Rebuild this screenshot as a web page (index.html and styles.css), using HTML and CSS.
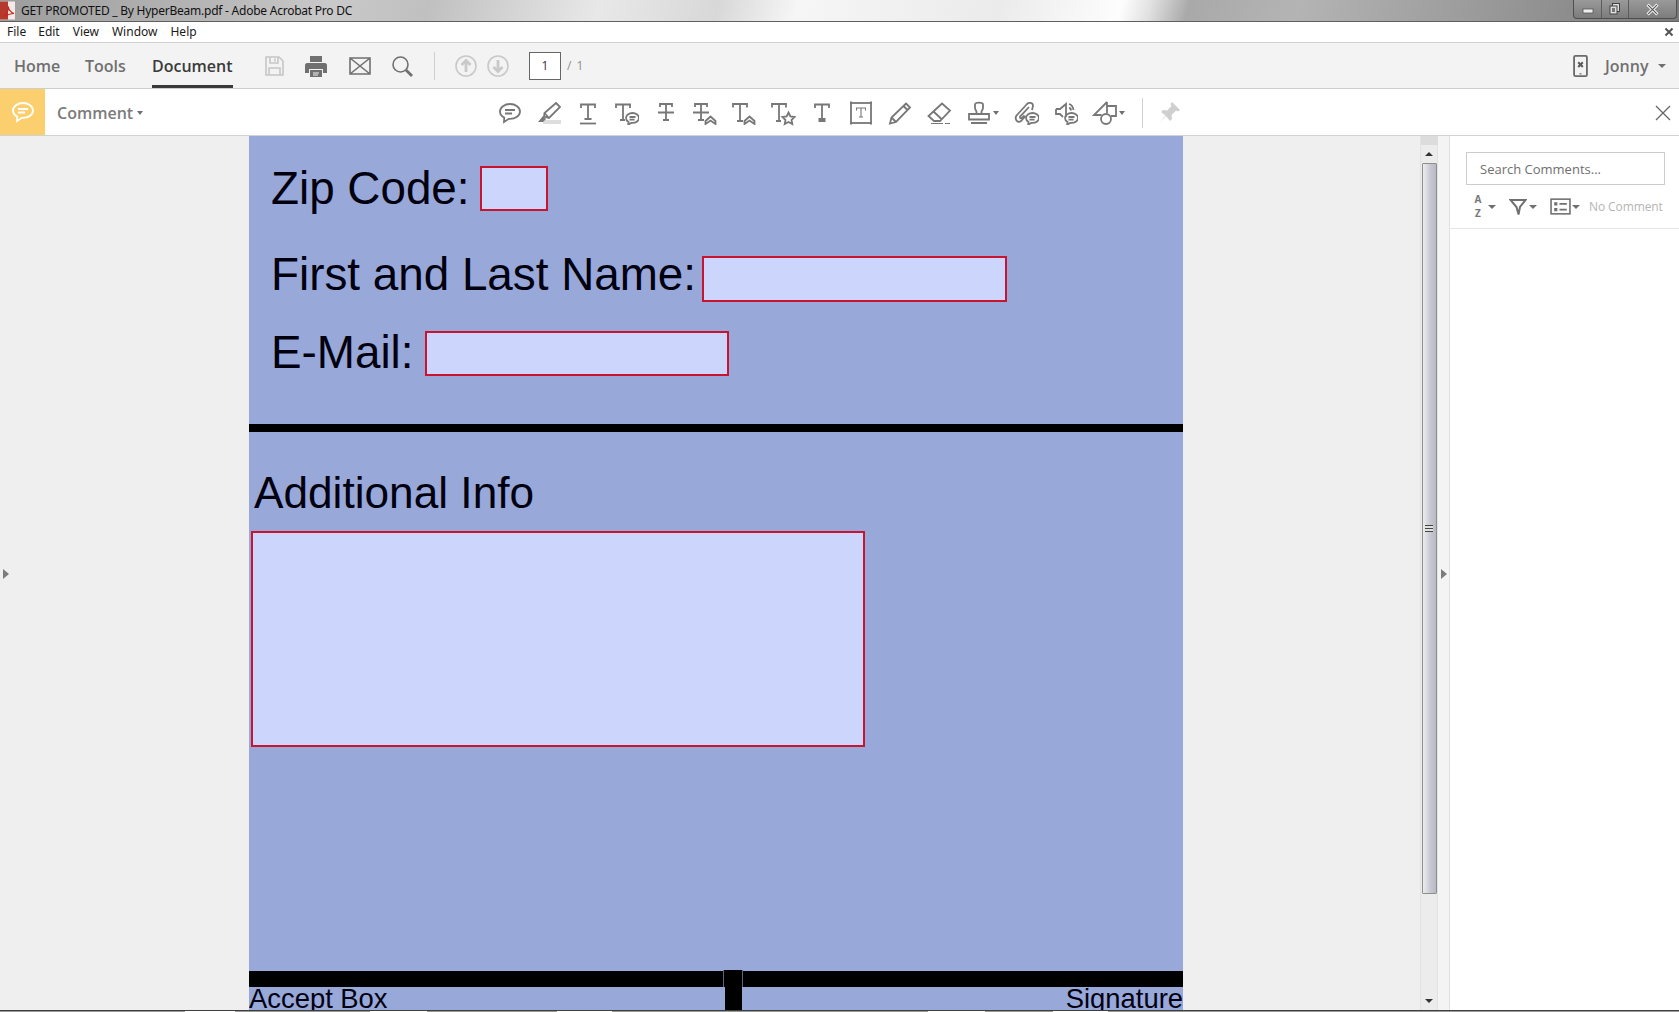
FILE: index.html
```html
<!DOCTYPE html>
<html lang="en">
<head>
<meta charset="utf-8">
<title>GET PROMOTED _ By HyperBeam.pdf - Adobe Acrobat Pro DC</title>
<link rel="stylesheet" href="styles.css">
</head>
<body>
<svg class="defs" xmlns="http://www.w3.org/2000/svg">
  <symbol id="s-t" viewBox="0 0 24 24"><path d="M5 7V3.500H19V7M12 3.500V18M8.500 18H15.500"/></symbol>
  <symbol id="s-bub" viewBox="0 0 24 24"><path d="M17.500 12c-3.600 0-6.500 2.300-6.500 5 0 1.600 1 3 2.500 3.900l-.3 2.600 3.200-1.600h1.100c3.600 0 6.500-2.200 6.500-4.900S21.100 12 17.500 12ZM14.500 16h6M14.500 18.600h5"/></symbol>
  <symbol id="s-chev" viewBox="0 0 24 24"><path d="M12.500 20l5-4.500 5 4.500v3L17.500 19.500L12.500 23Z"/></symbol>
</svg>
<div class="window">
  <header class="titlebar">
    <svg class="appicon" viewBox="0 0 16 18"><rect x="0" y="0" width="15" height="18" fill="#f4e9e6"/><rect x="0" y="0" width="8" height="18" fill="#b5392c"/><path d="M4 15c3-2 5-7 4-10 1 4 3 6 6 7-3 0-6 1-10 3Z" fill="none" stroke="#c8281e" stroke-width="1.200"/></svg>
    <span class="title">GET PROMOTED _ By HyperBeam.pdf - Adobe Acrobat Pro DC</span>
    <div class="wincontrols">
      <span class="winbtn min"><svg viewBox="0 0 12 12"><rect x="1" y="6" width="10" height="4" fill="#eee" stroke="#555" stroke-width=".8"/></svg></span>
      <span class="winbtn res"><svg viewBox="0 0 12 12"><rect x="3.500" y=".5" width="7" height="8" fill="#ddd" stroke="#444"/><rect x="1" y="3" width="7" height="8" fill="#ddd" stroke="#444"/><rect x="3" y="5" width="3" height="4" fill="#777"/></svg></span>
      <span class="winbtn cls"><svg viewBox="0 0 12 12"><path d="M1.500 1.500L10.500 10.500M10.500 1.500L1.500 10.500" stroke="#eee" stroke-width="3"/><path d="M2 2L10 10M10 2L2 10" stroke="#555" stroke-width="1"/></svg></span>
    </div>
  </header>

  <nav class="menubar">
    <span class="mi m-file">File</span><span class="mi m-edit">Edit</span><span class="mi m-view">View</span><span class="mi m-window">Window</span><span class="mi m-help">Help</span>
    <svg class="menuclose" viewBox="0 0 10 10"><path d="M1.500 1.500L8.500 8.500M8.500 1.500L1.500 8.500"/></svg>
  </nav>

  <div class="toolbar">
    <span class="tab t-home">Home</span>
    <span class="tab t-tools">Tools</span>
    <span class="tab t-doc">Document</span>
    <svg class="tbi tb-save" viewBox="0 0 24 24"><path d="M4 3H17L21 7V21H4ZM8 3V9H16V3M13 4.500V7.500M7 21V14H18V21"/></svg>
    <svg class="tbi tb-print" viewBox="0 0 24 24"><path class="solid" d="M6 2H18V8H6ZM3 9H21C22 9 23 10 23 11V19H19V15H5V19H1V11C1 10 2 9 3 9ZM6 16H18V23H6Z"/><path class="cut" d="M9 19H15M9 21H14"/></svg>
    <svg class="tbi tb-mail" viewBox="0 0 24 24"><path d="M2 4H22V20H2ZM2 4L22 20M22 4L2 20"/></svg>
    <svg class="tbi tb-search" viewBox="0 0 24 24"><circle cx="10.500" cy="10.500" r="7.500"/><path class="thick" d="M16 16L22 22"/></svg>
    <span class="tbdiv"></span>
    <svg class="tbi tb-up" viewBox="0 0 24 24"><circle cx="12" cy="12" r="10"/><path class="thick" d="M12 18V7M7.500 11L12 6.500L16.500 11"/></svg>
    <svg class="tbi tb-down" viewBox="0 0 24 24"><circle cx="12" cy="12" r="10"/><path class="thick" d="M12 6V17M7.500 13L12 17.500L16.500 13"/></svg>
    <span class="pagebox">1</span>
    <span class="pagetotal">/ 1</span>
    <svg class="phone" viewBox="0 0 16 24"><rect x="1" y="1" width="14" height="22" rx="1.500"/><path class="x" d="M5.500 8L10.500 13M10.500 8L5.500 13"/><path class="x2" d="M7 20.500H9"/></svg>
    <span class="user">Jonny</span>
    <span class="caret c-user"></span>
  </div>

  <div class="commentbar">
    <div class="ctile">
      <svg viewBox="0 0 24 24"><path d="M12 3C6.500 3 2 6.300 2 10.500c0 2.600 1.700 4.800 4.200 6.100L6 21l4.800-3.200c.4 0 .8.1 1.200.1 5.500 0 10-3.300 10-7.400S17.500 3 12 3ZM7 9h10M7 12.500h7"/></svg>
    </div>
    <span class="clabel">Comment</span>
    <span class="caret c-comment"></span>
    <div class="ctools">
      <span class="ci"><svg viewBox="0 0 24 24"><path d="M12 3C6.500 3 2 6.300 2 10.500c0 2.600 1.700 4.800 4.200 6.100L6 21l4.800-3.200c.4 0 .8.1 1.200.1 5.500 0 10-3.300 10-7.400S17.500 3 12 3ZM7 9h10M7 12.500h7"/></svg></span>
      <span class="ci"><svg viewBox="0 0 24 24"><rect class="band" x="6" y="19" width="18" height="4"/><path d="M19 2L23 6L12 17L7 15.500L7.500 12ZM7.500 12L12 17"/><path class="solid" d="M6 15L9 18L6 21H1Z"/></svg></span>
      <span class="ci"><svg viewBox="0 0 24 24"><use href="#s-t"/><path d="M4 22.500H20"/></svg></span>
      <span class="ci"><svg viewBox="0 0 24 24"><path d="M1 7V3.500H15V7M8 3.500V19M5 19H10"/><use href="#s-bub"/></svg></span>
      <span class="ci"><svg viewBox="0 0 24 24"><path d="M6 6V3H18V6M12 3V19M9 19H15M4 11.500H20"/></svg></span>
      <span class="ci"><svg viewBox="0 0 24 24"><path d="M2 6V3H14V6M8 3V19M5 19H11M0 11.500H16"/><use href="#s-chev"/></svg></span>
      <span class="ci"><svg viewBox="0 0 24 24"><path d="M1 6.500V3H15V6.500M8 3V20M5 20H11"/><use href="#s-chev"/></svg></span>
      <span class="ci"><svg viewBox="0 0 24 24"><path d="M1 6.500V3H15V6.500M8 3V20M5 20H10M17.500 11.500L19.400 15.500L23.500 16L20.500 19L21.300 23L17.500 21L13.700 23L14.500 19L11.500 16L15.600 15.500Z"/></svg></span>
      <span class="ci"><svg viewBox="0 0 24 24"><use href="#s-t"/><path d="M12 18V20M8.500 20H15.500"/></svg></span>
      <span class="ci"><svg viewBox="0 0 24 24"><rect x="2" y="2" width="20" height="20"/><path class="thin" d="M7.500 9.500V7H16.500V9.500M12 7V16M10 16H14"/><path class="dots" d="M1 1.500H3M21 1.500H23M1 22.500H3M21 22.500H23"/></svg></span>
      <span class="ci"><svg viewBox="0 0 24 24"><path d="M18 2.500L22 6.500L8 21L2 22.500L3.500 16.500ZM3.500 16.500L8 21M15.500 5L19.500 9"/></svg></span>
      <span class="ci"><svg viewBox="0 0 24 24"><path d="M15 2.500L23 9.500L13 20H7L1.500 15ZM6.500 10.500L14.500 18"/><path class="thin" d="M4 22.500H16M18 22.500H23"/></svg></span>
      <span class="ci wide"><svg viewBox="0 0 24 24"><path d="M8 3.500C8 1 16 1 16 3.500V7C16 9 14.500 9.500 14.500 11V13H9.500V11C9.500 9.500 8 9 8 7ZM2 13H22V18.500H2ZM4 22H20"/></svg><span class="caret c-tool"></span></span>
      <span class="ci"><svg viewBox="0 0 24 24"><path d="M10.500 15L6 20C2 23-1 17 2 14L12 3C14 1 18 1.500 18 5L17 9M14 6L5.500 15C4.500 16 5 18 7 17L9.500 14.500"/><use href="#s-bub"/></svg></span>
      <span class="ci"><svg viewBox="0 0 24 24"><path d="M2 8H6L12 3V16M9 16L6 13H2V8M15 3C17 3.500 19 5.500 19.500 9M15 7C16 7 17 8 17 9.500"/><use href="#s-bub"/></svg></span>
      <span class="ci mid"><svg viewBox="0 0 24 24"><path d="M14 1L1 14H8.500M14 1V12M14 5H23V15H18"/><circle cx="13" cy="18" r="5"/></svg><span class="caret c-tool"></span></span>
      <span class="cdiv"></span>
      <svg class="pin" viewBox="0 0 24 24"><path d="M15 1L23 9L21 10.500L19 9.500L14.500 14L15 18L13 20L9 15L3 21L8.500 14.500L4 11L6 9L10 9.500L14.500 5L13.500 3Z"/></svg>
    </div>
    <svg class="cclose" viewBox="0 0 16 16"><path d="M1 1L15 15M15 1L1 15"/></svg>
  </div>

  <main class="main">
    <div class="left">
      <span class="tri t-left"></span>
    </div>
    <section class="page">
      <div class="row r-zip">
        <span class="lbl">Zip Code:</span>
        <span class="field f-zip"></span>
      </div>
      <div class="row r-name">
        <span class="lbl">First and Last Name:</span>
        <span class="field f-name"></span>
      </div>
      <div class="row r-mail">
        <span class="lbl">E-Mail:</span>
        <span class="field f-mail"></span>
      </div>
      <div class="rule"></div>
      <h2 class="info">Additional Info</h2>
      <div class="field f-info"></div>
      <div class="bar"></div>
      <div class="foot">
        <span>Accept Box</span>
        <span>Signature</span>
      </div>
      <span class="notch"></span>
      <span class="stem"></span>
    </section>
    <div class="gutter"></div>
    <div class="scroll">
      <span class="sc-top"></span>
      <span class="sc-btn"><span class="arr up"></span></span>
      <div class="thumb"><span class="grip"></span></div>
      <span class="sc-fill"></span>
      <span class="sc-btn"><span class="arr down"></span></span>
    </div>
    <div class="handle"><span class="tri t-right"></span></div>
    <aside class="panel">
      <div class="search">Search Comments...</div>
      <div class="filters">
        <span class="az">A<br>Z</span><span class="caret c-f1"></span>
        <svg class="fi f-funnel" viewBox="0 0 18 18"><path d="M1.500 2H16.500L11 9L9.500 16.500L7.500 9Z"/></svg><span class="caret c-f2"></span>
        <svg class="fi f-list" viewBox="0 0 20 18"><rect x="1" y="2" width="18" height="14"/><path class="solid" d="M4 5H7V8H4ZM4 10.500H7V13.500H4Z"/><path d="M9 6.500H16M9 12H16"/></svg><span class="caret c-f3"></span>
        <span class="nocomment">No Comment</span>
      </div>
    </aside>
  </main>

  <footer class="strip">
    <span class="seg g1"></span><span class="seg w1"></span><span class="seg g2"></span><span class="seg w2"></span><span class="seg g3"></span><span class="seg w3"></span><span class="seg g4"></span><span class="seg w4"></span><span class="seg g5"></span><span class="seg w5"></span><span class="seg g6"></span>
  </footer>
</div>
</body>
</html>
```
FILE: styles.css
```css
* { box-sizing: border-box; }
html, body { margin: 0; padding: 0; }
body { width: 1679px; height: 1012px; overflow: hidden; background: #fff; font-family: "Open Sans", "Noto Sans", sans-serif; }
.defs { display: none; }
.defs path { fill: none; }
.window { display: flex; flex-direction: column; width: 1679px; height: 1012px; }

/* title bar */
.titlebar { position: relative; display: flex; align-items: center; height: 22px; flex: none; border-bottom: 1px solid #5f5f5f;
  background: linear-gradient(105deg, #9c9c9c 0, #b5b5b5 195px, #c9c9c9 320px, #c0c0c0 415px, #e8e8e8 580px, #d8d8d8 695px, #f6f6f6 773px, #ebebeb 966px, #fdfdfd 1085px, #e2e2e2 1112px, #a9a9a9 1150px, #b4b4b4 1256px, #8f8f8f 1507px, #7a7a7a 1627px); }
.appicon { width: 16px; height: 19px; flex: none; }
.title { margin-left: 5px; font-family: "Noto Sans", sans-serif; font-size: 12px; line-height: 20px; color: #111; white-space: nowrap; letter-spacing: -.24px; }
.wincontrols { display: flex; margin-left: auto; margin-right: 2px; height: 19px; align-self: flex-start; border: 1px solid #4f4f4f; border-top: 0; border-radius: 0 0 4px 4px; background: linear-gradient(#9a9a9a, #7c7c7c); }
.winbtn { display: flex; align-items: center; justify-content: center; border-right: 1px solid #5c5c5c; }
.winbtn:last-child { border-right: 0; }
.winbtn svg { width: 12px; height: 12px; }
.min { width: 28px; } .res { width: 27px; } .cls { width: 47px; }
.cls svg { width: 13px; height: 13px; }

/* menu bar */
.menubar { display: flex; align-items: center; height: 21px; flex: none; background: #fff; border-bottom: 1px solid #cfcfcf; font-family: "Noto Sans", sans-serif; font-size: 12px; color: #1a1a1a; }
.mi { line-height: 18px; }
.m-file { margin-left: 7px; } .m-edit { margin-left: 12px; } .m-view { margin-left: 13px; } .m-window { margin-left: 13px; } .m-help { margin-left: 13px; }
.menuclose { width: 10px; height: 10px; margin-left: auto; margin-right: 5px; fill: none; stroke: #555; stroke-width: 2; }

/* main toolbar */
.toolbar { display: flex; align-items: center; height: 46px; flex: none; background: #f3f3f3; border-bottom: 1px solid #cdcdcd; color: #707070; }
.tab { font-size: 16px; font-weight: 600; height: 45px; line-height: 46px; white-space: nowrap; }
.t-home { margin-left: 14px; width: 46px; }
.t-tools { margin-left: 25px; width: 43px; }
.t-doc { margin-left: 24px; width: 81px; color: #3a3a3a; border-bottom: 3px solid #3a3a3a; }
.tbi { width: 24px; height: 24px; flex: none; fill: none; stroke: #707070; stroke-width: 1.600; }
.tbi .solid { fill: #707070; stroke: none; }
.tbi .cut { stroke: #f3f3f3; stroke-width: 1.200; }
.tbi .thick { stroke-width: 2.800; }
.tb-save { margin-left: 29px; stroke: #c6c6c6; }
.tb-print { margin-left: 18px; }
.tb-mail { margin-left: 20px; }
.tb-search { margin-left: 18px; }
.tb-up, .tb-down { stroke: #c9c9c9; }
.tbdiv { width: 1px; height: 28px; margin-left: 20px; background: #cfcfcf; flex: none; }
.tb-up { margin-left: 19px; }
.tb-down { margin-left: 8px; }
.pagebox { width: 32px; height: 28px; margin-left: 19px; background: #fff; border: 1px solid #666; text-align: center; font-size: 12px; line-height: 26px; color: #333; flex: none; }
.pagetotal { margin-left: 6px; font-size: 12px; color: #8f8f8f; letter-spacing: 1px; }
.phone { width: 15px; height: 22px; margin-left: auto; fill: #8a8a8a; stroke: #6b6b6b; stroke-width: 1.500; flex: none; }
.phone rect { fill: #f3f3f3; stroke-width: 2; }
.phone .x { stroke: #5a5a5a; stroke-width: 2.200; fill: none; }
.phone .x2 { stroke: #777; stroke-width: 1.500; fill: none; }
.user { margin-left: 17px; font-size: 16px; font-weight: 600; width: 46px; white-space: nowrap; }
.caret { display: inline-block; width: 0; height: 0; flex: none; border-left: 4px solid transparent; border-right: 4px solid transparent; border-top: 4px solid #707070; }
.c-user { margin-left: 7px; margin-right: 13px; }

/* comment bar */
.commentbar { display: flex; align-items: center; height: 47px; flex: none; background: #fff; border-bottom: 1px solid #d2d2d2; }
.ctile { display: flex; align-items: center; justify-content: center; align-self: stretch; width: 45px; background: #fbcf6d; flex: none; }
.ctile svg { width: 24px; height: 24px; fill: none; stroke: #fff; stroke-width: 1.800; }
.clabel { margin: 2px 0 0 12px; width: 76px; font-size: 16px; font-weight: 600; color: #7b7b7b; white-space: nowrap; }
.c-comment { margin: 2px 0 0 4px; border-left-width: 3.500px; border-right-width: 3.500px; }
.ctools { display: flex; align-items: center; margin: 2px 0 0 347px; }
.ci { display: flex; align-items: center; justify-content: center; width: 39px; height: 30px; flex: none; }
.ci svg { width: 24px; height: 24px; fill: none; stroke: #777; stroke-width: 1.800; overflow: visible; }
.ci use { stroke: #777; fill: none; }
.ci .solid { fill: #777; stroke: none; }
.ci .band { fill: #dedede; stroke: none; }
.ci .thin { stroke-width: 1.100; }
.ci .dots { stroke-width: 2.200; }
.ci.wide { width: 49px; justify-content: flex-start; padding-left: 9px; }
.ci.mid { width: 46px; justify-content: flex-start; padding-left: 8px; }
.c-tool { margin-left: 2px; border-left-width: 3.500px; border-right-width: 3.500px; }
.cdiv { width: 1px; height: 30px; margin-left: 11px; background: #d0d0d0; flex: none; }
.pin { width: 24px; height: 24px; margin-left: 14px; fill: #cfcfcf; stroke: none; flex: none; }
.cclose { width: 16px; height: 16px; margin: 2px 8px 0 auto; fill: none; stroke: #666; stroke-width: 1.300; flex: none; }

/* main */
.main { display: flex; height: 874px; flex: none; background: #efefef; overflow: hidden; }
.left { display: flex; align-items: center; width: 249px; height: 876px; flex: none; padding-left: 3px; }
.tri { display: block; width: 0; height: 0; border-top: 5px solid transparent; border-bottom: 5px solid transparent; border-left: 6px solid #7c7c7c; }
.page { position: relative; display: flex; flex-direction: column; width: 934px; height: 874px; flex: none; overflow: hidden; padding-top: 28px; background: #98a8d9; color: #00000f; font-family: "Liberation Sans", Arial, sans-serif; }
.row { display: flex; align-items: flex-start; padding-left: 22px; flex: none; }
.lbl { margin-top: 2px; font-size: 45.800px; line-height: 46px; white-space: nowrap; }
.field { display: block; flex: none; background: #ccd6fd; border: 2px solid #c8142f; }
.f-zip { width: 68px; height: 45px; margin-left: 10.800px; margin-top: 2px; }
.f-name { width: 305px; height: 46px; margin-left: 6.300px; margin-top: 6px; }
.f-mail { width: 304px; height: 45px; margin-left: 11.600px; margin-top: 3px; }
.r-name { margin-top: 38px; }
.r-mail { margin-top: 26px; }
.rule { height: 8px; margin-top: 48px; background: #000; flex: none; }
.info { margin: 38px 0 0 5px; font-size: 44.200px; line-height: 46px; font-weight: 400; flex: none; }
.f-info { width: 614px; height: 216px; margin: 15px 0 0 2px; }
.bar { height: 16px; margin-top: 224px; background: #000; flex: none; }
.foot { display: flex; justify-content: space-between; margin-top: -2px; font-size: 27.400px; line-height: 28px; white-space: nowrap; flex: none; }
.notch { position: absolute; left: 474px; top: 834px; width: 20px; height: 17px; background: #000; border-left: 1px solid #5a6580; border-right: 1px solid #5a6580; }
.stem { position: absolute; left: 476px; top: 850px; width: 17px; height: 24px; background: #000; }
.gutter { width: 237px; flex: none; }

/* scrollbar */
.scroll { display: flex; flex-direction: column; align-items: center; width: 18px; flex: none; background: #ececec; border-left: 1px solid #e2e2e2; border-right: 1px solid #e2e2e2; }
.sc-top { display: block; width: 17px; height: 9px; background: #dcdcdc; flex: none; }
.sc-btn { display: flex; align-items: center; justify-content: center; width: 15px; height: 18px; flex: none; }
.arr { display: block; width: 0; height: 0; border-left: 4px solid transparent; border-right: 4px solid transparent; }
.arr.up { border-bottom: 4px solid #333; }
.arr.down { border-top: 4px solid #333; }
.thumb { display: flex; align-items: center; justify-content: center; width: 15px; height: 731px; flex: none; border: 1px solid #8e8e8e; border-radius: 1px; background: linear-gradient(90deg, #eeeeee, #c9c9d3 55%, #b8b8c2); }
.grip { display: block; width: 8px; height: 7px; border-top: 1px solid #444; border-bottom: 1px solid #444; background: linear-gradient(#e0e0e0 0, #e0e0e0 2px, #444 2px, #444 3px, #e0e0e0 3px); }
.sc-fill { flex: 1; }

/* handle + panel */
.handle { display: flex; align-items: center; justify-content: center; width: 12px; height: 876px; flex: none; background: #f4f4f4; border-right: 1px solid #e1e1e1; }
.panel { width: 229px; flex: none; background: #fff; }
.search { width: 199px; height: 33px; margin: 16px 0 0 16px; padding-left: 13px; border: 1px solid #cccccc; font-size: 13px; line-height: 32px; color: #6f6f6f; }
.filters { position: relative; display: flex; align-items: center; height: 44px; border-bottom: 1px solid #e6e6e6; color: #777; }
.az { margin-left: 23px; width: 10px; font-size: 10px; line-height: 13.700px; font-weight: 700; text-align: center; }
.c-f1 { margin-left: 5px; }
.fi { flex: none; fill: none; stroke: #707070; stroke-width: 2; }
.f-funnel { width: 18px; height: 18px; margin-left: 13px; }
.c-f2 { margin-left: 2px; }
.f-list { width: 21px; height: 19px; margin-left: 13px; stroke-width: 1.500; }
.f-list .solid { fill: #707070; stroke: none; }
.c-f3 { margin-left: 1px; }
.nocomment { margin-left: 9px; font-size: 12px; color: #b5b5b5; white-space: nowrap; letter-spacing: -.1px; }

/* bottom strip */
.strip { display: flex; height: 2px; flex: none; border-top: 1px solid #3f3f3f; background: #9a9a9a; }
.seg { display: block; height: 1px; }
.g1 { width: 185px; } .w1 { width: 50px; background: #fff; }
.g2 { width: 135px; } .w2 { width: 57px; background: #fff; }
.g3 { width: 130px; } .w3 { width: 55px; background: #fff; }
.g4 { width: 316px; } .w4 { width: 57px; background: #fff; }
.g5 { width: 68px; } .w5 { width: 55px; background: #fff; }
.g6 { flex: 1; }
```
